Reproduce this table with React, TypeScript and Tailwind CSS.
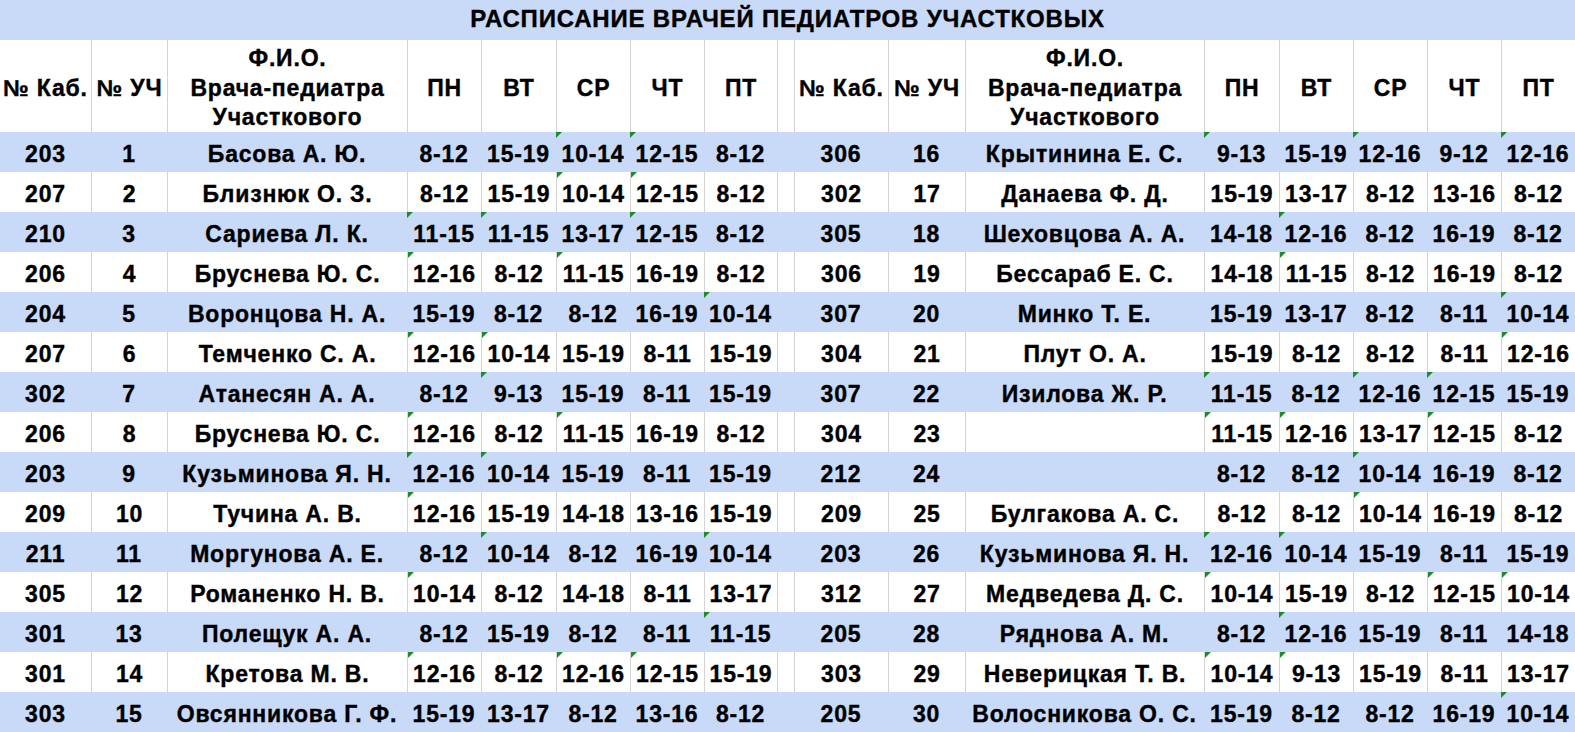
import React from "react";

const GRID =
  "grid grid-cols-[91px_76px_240px_74px_75px_74px_74px_73px_17px_94px_77px_239px_75px_74px_74px_74px_74px]";

type Row = [string, string, string, string[], number[]];

const left: Row[] = [
  ["203", "1", "Басова А. Ю.", ["8-12", "15-19", "10-14", "12-15", "8-12"], [2, 3]],
  ["207", "2", "Близнюк О. З.", ["8-12", "15-19", "10-14", "12-15", "8-12"], [2, 3]],
  ["210", "3", "Сариева Л. К.", ["11-15", "11-15", "13-17", "12-15", "8-12"], [0, 1, 3]],
  ["206", "4", "Бруснева Ю. С.", ["12-16", "8-12", "11-15", "16-19", "8-12"], [0, 2]],
  ["204", "5", "Воронцова Н. А.", ["15-19", "8-12", "8-12", "16-19", "10-14"], [4]],
  ["207", "6", "Темченко С. А.", ["12-16", "10-14", "15-19", "8-11", "15-19"], [0, 1]],
  ["302", "7", "Атанесян А. А.", ["8-12", "9-13", "15-19", "8-11", "15-19"], [1]],
  ["206", "8", "Бруснева Ю. С.", ["12-16", "8-12", "11-15", "16-19", "8-12"], [0, 2]],
  ["203", "9", "Кузьминова Я. Н.", ["12-16", "10-14", "15-19", "8-11", "15-19"], [0, 1]],
  ["209", "10", "Тучина А. В.", ["12-16", "15-19", "14-18", "13-16", "15-19"], [0]],
  ["211", "11", "Моргунова А. Е.", ["8-12", "10-14", "8-12", "16-19", "10-14"], [1, 4]],
  ["305", "12", "Романенко Н. В.", ["10-14", "8-12", "14-18", "8-11", "13-17"], [0]],
  ["301", "13", "Полещук А. А.", ["8-12", "15-19", "8-12", "8-11", "11-15"], [4]],
  ["301", "14", "Кретова М. В.", ["12-16", "8-12", "12-16", "12-15", "15-19"], [0, 2, 3]],
  ["303", "15", "Овсянникова Г. Ф.", ["15-19", "13-17", "8-12", "13-16", "8-12"], []],
];

const right: Row[] = [
  ["306", "16", "Крытинина Е. С.", ["9-13", "15-19", "12-16", "9-12", "12-16"], [0, 2, 4]],
  ["302", "17", "Данаева Ф. Д.", ["15-19", "13-17", "8-12", "13-16", "8-12"], []],
  ["305", "18", "Шеховцова А. А.", ["14-18", "12-16", "8-12", "16-19", "8-12"], [1]],
  ["306", "19", "Бессараб Е. С.", ["14-18", "11-15", "8-12", "16-19", "8-12"], [1]],
  ["307", "20", "Минко Т. Е.", ["15-19", "13-17", "8-12", "8-11", "10-14"], [4]],
  ["304", "21", "Плут О. А.", ["15-19", "8-12", "8-12", "8-11", "12-16"], [4]],
  ["307", "22", "Изилова Ж. Р.", ["11-15", "8-12", "12-16", "12-15", "15-19"], [0, 2, 3]],
  ["304", "23", "", ["11-15", "12-16", "13-17", "12-15", "8-12"], [0, 1, 3]],
  ["212", "24", "", ["8-12", "8-12", "10-14", "16-19", "8-12"], [2]],
  ["209", "25", "Булгакова А. С.", ["8-12", "8-12", "10-14", "16-19", "8-12"], [2]],
  ["203", "26", "Кузьминова Я. Н.", ["12-16", "10-14", "15-19", "8-11", "15-19"], [0, 1]],
  ["312", "27", "Медведева Д. С.", ["10-14", "15-19", "8-12", "12-15", "10-14"], [0, 3, 4]],
  ["205", "28", "Ряднова А. М.", ["8-12", "12-16", "15-19", "8-11", "14-18"], [1]],
  ["303", "29", "Неверицкая Т. В.", ["10-14", "9-13", "15-19", "8-11", "13-17"], [0, 1]],
  ["205", "30", "Волосникова О. С.", ["15-19", "8-12", "8-12", "16-19", "10-14"], [4]],
];

function Cell({
  children,
  tri,
  bordered,
  first,
}: {
  children?: React.ReactNode;
  tri?: boolean;
  bordered?: boolean;
  first?: boolean;
}) {
  return (
    <div
      className={
        "relative flex items-center justify-center pt-[4px] whitespace-nowrap " +
        (bordered && !first ? "border-l border-[#d4d4d4]" : "")
      }
    >
      {tri && (
        <span className="absolute left-0 top-0 h-0 w-0 border-t-[6px] border-r-[6px] border-t-[#1f8a2a] border-r-transparent" />
      )}
      {children}
    </div>
  );
}

function DataRow({ l, r, blue }: { l: Row; r: Row; blue: boolean }) {
  const b = !blue;
  return (
    <div className={GRID + " h-[40px] " + (blue ? "bg-[#c9daf8]" : "bg-white")}>
      <Cell bordered={b} first>
        {l[0]}
      </Cell>
      <Cell bordered={b}>{l[1]}</Cell>
      <Cell bordered={b}>{l[2]}</Cell>
      {l[3].map((t, i) => (
        <Cell key={"l" + i} bordered={b} tri={l[4].includes(i)}>
          {t}
        </Cell>
      ))}
      <Cell bordered={b} />
      <Cell bordered={b}>{r[0]}</Cell>
      <Cell bordered={b}>{r[1]}</Cell>
      <Cell bordered={b}>{r[2]}</Cell>
      {r[3].map((t, i) => (
        <Cell key={"r" + i} bordered={b} tri={r[4].includes(i)}>
          {t}
        </Cell>
      ))}
    </div>
  );
}

function HeaderCell({ children, first }: { children?: React.ReactNode; first?: boolean }) {
  return (
    <div
      className={
        "flex flex-col items-center justify-center pt-[4px] text-center leading-[29.5px] whitespace-nowrap " +
        (first ? "" : "border-l border-[#d4d4d4]")
      }
    >
      {children}
    </div>
  );
}

function HeaderHalf({ first }: { first?: boolean }) {
  return (
    <>
      <HeaderCell first={first}>№ Каб.</HeaderCell>
      <HeaderCell>№ УЧ</HeaderCell>
      <HeaderCell>
        <span>Ф.И.О.</span>
        <span>Врача-педиатра</span>
        <span>Участкового</span>
      </HeaderCell>
      <HeaderCell>ПН</HeaderCell>
      <HeaderCell>ВТ</HeaderCell>
      <HeaderCell>СР</HeaderCell>
      <HeaderCell>ЧТ</HeaderCell>
      <HeaderCell>ПТ</HeaderCell>
    </>
  );
}

export default function App() {
  return (
    <div className="w-[1575px] h-[732px] overflow-hidden bg-white font-['Liberation_Sans',Arial,sans-serif] text-[23px] font-bold tracking-[0.8px] text-black [-webkit-text-stroke:0.4px_#000]">
      <div className="flex h-[40px] items-center justify-center bg-[#c9daf8] pb-[3px] text-[24px] tracking-[0.8px]">
        РАСПИСАНИЕ ВРАЧЕЙ ПЕДИАТРОВ УЧАСТКОВЫХ
      </div>
      <div className={GRID + " h-[92px] bg-white"}>
        <HeaderHalf first />
        <HeaderCell />
        <HeaderHalf />
      </div>
      {left.map((l, i) => (
        <DataRow key={i} l={l} r={right[i]} blue={i % 2 === 0} />
      ))}
    </div>
  );
}
